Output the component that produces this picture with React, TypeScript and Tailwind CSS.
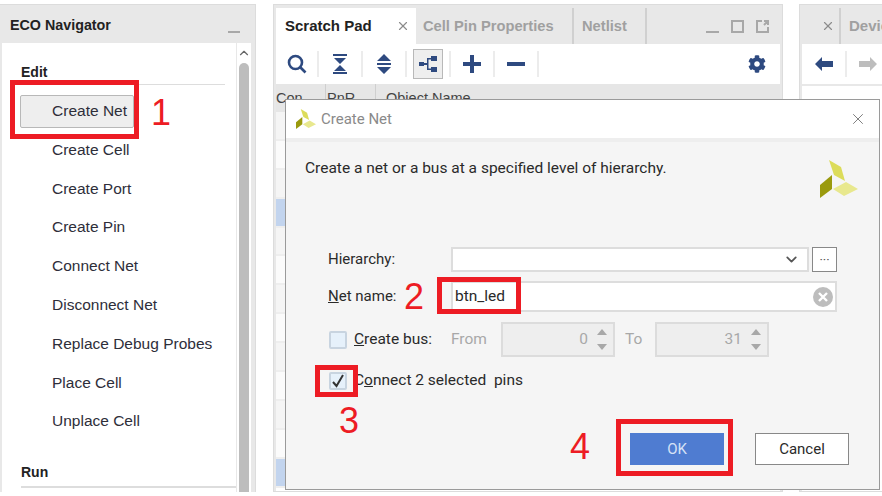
import type { ReactNode } from 'react';
import { ChevronDown, ChevronUp, X } from 'lucide-react';
import { FaCog } from 'react-icons/fa';

const edits = ['Create Cell', 'Create Port', 'Create Pin', 'Connect Net', 'Disconnect Net', 'Replace Debug Probes', 'Place Cell', 'Unplace Cell'];

// Selected rows of the object table
const selectedRows = [3, 12];
const rows = Array.from({ length: 13 }, (_, i) => i);

function ToolCell({ width = 44, children }: { width?: number; children: ReactNode }) {
  return (
    <div className="flex items-center" style={{ width }}>
      <span className="flex flex-1 items-center justify-center">{children}</span>
      <span className="h-[26px] w-[2px] bg-[#ececec]" />
    </div>
  );
}

function XilinxMark({ size }: { size: number }) {
  return (
    <svg width={size} height={size} viewBox="0 0 38 38">
      <path d="M9 0 L21 7 L25 21 L14 15 Z" fill="#dcdc5a" />
      <path d="M0 25 L12 15 L12 29 L0 38 Z" fill="#9a9a0e" />
      <path d="M13 29 L26 22 L38 29 L24 36 Z" fill="#e8e88e" />
    </svg>
  );
}

function Spinner({ value }: { value: string }) {
  return (
    <div className="flex h-[35px] w-[114px] items-center justify-end border-2 border-[#dcdcdc] bg-[#eeeeee] pr-[6px] text-[#a8a8a8]">
      <span className="mr-[9px]">{value}</span>
      <span className="flex flex-col gap-[9px]">
        <svg width="10" height="6" viewBox="0 0 10 6"><path d="M5 0 L10 6 H0 Z" fill="#a8a8a8" /></svg>
        <svg width="10" height="6" viewBox="0 0 10 6"><path d="M0 0 H10 L5 6 Z" fill="#a8a8a8" /></svg>
      </span>
    </div>
  );
}

function Callout({ className }: { className: string }) {
  return <div className={`absolute border-[5px] border-[#ed1c24] ${className}`} />;
}

function Marker({ className, children }: { className: string; children: ReactNode }) {
  return <span className={`absolute text-[36px] leading-none text-[#ed1c24] ${className}`}>{children}</span>;
}

export default function App() {
  return (
    <div className="relative h-[496px] w-[882px] overflow-hidden bg-white font-['Liberation_Sans',sans-serif] text-[15.5px] text-[#2e2e3a]">
      <div className="flex h-full items-start pt-[4px]">
        {/* ECO navigator */}
        <section className="flex h-[488px] w-[256px] shrink-0 flex-col border-t border-r border-[#dcdcdc] bg-[#e8e8e8] pr-[4px] pl-[2px]">
          <header className="flex h-[38px] shrink-0 items-center justify-between pt-[3px] pr-[11px] pl-[8px]">
            <span className="text-[14.3px] font-bold text-[#222222]">ECO Navigator</span>
            <span className="mt-[12px] h-[2px] w-[12px] bg-[#a8a8a8]" />
          </header>
          <div className="flex min-h-0 flex-1 bg-white">
            <div className="min-w-0 flex-1 pt-[19px] pl-[19px]">
              <div className="mr-[11px] border-b border-[#dddddd] pb-[1px] text-[14px] font-bold text-[#222222]">Edit</div>
              <div className="mt-[10px] mr-[102px] -ml-px flex h-[33px] items-center justify-end rounded-[2px] border border-[#b8b8b8] bg-[#eeeeee] pr-[6px] pb-[1px]">Create Net</div>
              <ul className="mt-[2px] pl-[31px]">
                {edits.map((label) => (
                  <li key={label} className="flex h-[38.8px] items-center">{label}</li>
                ))}
              </ul>
              <div className="mt-[22px] border-b-2 border-[#dddddd] pb-[3px] text-[14px] font-bold text-[#222222]">Run</div>
            </div>
            <div className="flex w-[15px] flex-col items-center border-l border-[#e8e8e8] pt-[3px]">
              <ChevronUp size={14} strokeWidth={2} className="text-[#666666]" />
              <div className="mt-[3px] w-[10px] flex-1 rounded-t-[5px] bg-[#bdbdbd]" />
            </div>
          </div>
        </section>

        {/* Scratch pad */}
        <section className="ml-[17px] flex h-[488px] w-[510px] shrink-0 flex-col border border-[#dcdcdc] bg-[#e8e8e8] px-[2px] pt-[3px]">
          <div className="flex h-[36px] shrink-0 items-center">
            <div className="flex h-full w-[140px] items-center justify-between bg-white pr-[6px] pl-[9px] text-[15px] font-bold text-[#222222]">
              Scratch Pad <X size={14} strokeWidth={2} className="text-[#8c8c8c]" />
            </div>
            <span className="flex h-full w-[158px] items-center border-r-2 border-[#d0d0d0] pl-[7px] text-[14.7px] font-bold text-[#a0a0a0]">Cell Pin Properties</span>
            <span className="flex h-full w-[73px] items-center border-r-2 border-[#d0d0d0] pl-[8px] text-[14.7px] font-bold text-[#a0a0a0]">Netlist</span>
            <span className="ml-auto flex items-center gap-[12px] pr-[11px]">
              <span className="mt-[12px] h-[2px] w-[13px] bg-[#a8a8a8]" />
              <span className="h-[13px] w-[13px] border-2 border-[#a8a8a8]" />
              <svg width="13" height="13" viewBox="0 0 13 13" fill="none" stroke="#a8a8a8" strokeWidth="2"><path d="M6 1 H1 V12 H12 V7" /><path d="M8 1 H12 V5 M12 1 L8 5" /></svg>
            </span>
          </div>
          <div className="flex h-[40px] shrink-0 items-center bg-white pr-[14px]">
            <ToolCell width={43}>
              <svg width="20" height="20" viewBox="0 0 20 20" fill="none" stroke="#2e4a80" strokeWidth="2.6"><circle cx="8.5" cy="8.5" r="6.5" /><path d="M13 13 L18.5 18.5" /></svg>
            </ToolCell>
            <ToolCell>
              <svg width="16" height="20" viewBox="0 0 16 20" fill="#2e4a80"><path d="M1 0 H15 V2 H1 Z M2 4 H14 L8 10 Z M8 11 L14 17 H2 Z M1 18 H15 V20 H1 Z" /></svg>
            </ToolCell>
            <ToolCell>
              <svg width="16" height="20" viewBox="0 0 16 20" fill="#2e4a80"><path d="M8 0 L15 7 H1 Z M1 9 H15 V11 H1 Z M1 13 H15 L8 20 Z" /></svg>
            </ToolCell>
            <ToolCell>
              <span className="flex h-[30px] w-[30px] items-center justify-center border border-[#b8b8b8] bg-[#eeeeee]">
                <svg width="18" height="18" viewBox="0 0 18 18" fill="#2e4a80"><path d="M0 7 H5 V11 H0 Z M12 1 H18 V6 H12 Z M12 12 H18 V17 H12 Z" /><path d="M5 8 H8 V3 H12 V4.5 H9.5 V13.5 H12 V15 H8 V10 H5 Z" /></svg>
              </span>
            </ToolCell>
            <ToolCell>
              <svg width="18" height="18" viewBox="0 0 18 18" fill="#2e4a80"><path d="M7 0 H11 V7 H18 V11 H11 V18 H7 V11 H0 V7 H7 Z" /></svg>
            </ToolCell>
            <ToolCell>
              <svg width="18" height="18" viewBox="0 0 18 18" fill="#2e4a80"><path d="M0 7 H18 V11 H0 Z" /></svg>
            </ToolCell>
            <FaCog size={18} className="ml-auto text-[#2e4a80]" />
          </div>
          <div className="flex h-[28px] shrink-0 bg-[#e6e6e6] text-[14.5px] text-[#444444]">
            <span className="w-[50px] border-r border-[#cfcfcf] pt-[4px]">Con</span>
            <span className="w-[50px] border-r border-[#cfcfcf] pt-[4px] pl-[1px]">PnR</span>
            <span className="flex-1 pt-[4px] pl-[10px]">Object Name</span>
          </div>
          <div className="min-h-0 flex-1 overflow-hidden bg-white">
            {rows.map((i) => (
              <div
                key={i}
                className={`h-[28.9px] border-b-2 border-[#eeeeee] ${selectedRows.includes(i) ? 'bg-[#c2d4ee]' : i % 2 === 0 ? 'bg-[#f5f5f5]' : 'bg-[#fbfbfb]'}`}
              />
            ))}
          </div>
        </section>

        {/* Device panel, cut off by the window edge */}
        <section className="ml-[16px] flex h-[488px] w-[90px] shrink-0 flex-col border border-[#dcdcdc] bg-[#e8e8e8] pt-[3px] pl-[2px]">
          <div className="flex h-[36px] shrink-0 items-center">
            <X size={14} strokeWidth={2} className="ml-[19px] shrink-0 text-[#8c8c8c]" />
            <span className="ml-[4px] flex h-full items-center overflow-hidden border-l-2 border-[#d0d0d0] pl-[8px] text-[15px] font-bold text-[#a0a0a0]">Device</span>
          </div>
          <div className="flex h-[40px] shrink-0 items-center bg-white pl-[13px]">
            <svg width="18" height="14" viewBox="0 0 18 14" fill="#2e4a80"><path d="M0 7 L7 0 V4 H18 V10 H7 V14 Z" /></svg>
            <span className="mx-[12px] h-[26px] w-[2px] bg-[#ececec]" />
            <svg width="18" height="14" viewBox="0 0 18 14" fill="#bdbdbd"><path d="M18 7 L11 0 V4 H0 V10 H11 V14 Z" /></svg>
          </div>
          <div className="flex-1 border-t-2 border-[#e8e8e8] bg-white" />
        </section>
      </div>

      {/* Create Net dialog */}
      <div className="absolute top-[99px] left-[285px] flex h-[391px] w-[595px] flex-col border border-[#9a9a9a] bg-[#f5f5f5] font-['Roboto',sans-serif] text-[15.5px] text-[#2a2a2a]">
        <div className="box-content flex h-[38px] shrink-0 items-center border-b-[4px] border-[#eeeeee] bg-white pr-[12px] pl-[10px]">
          <XilinxMark size={20} />
          <span className="ml-[5px] text-[15px] text-[#8a8a8a]">Create Net</span>
          <X size={18} strokeWidth={1} className="ml-auto text-[#555555]" />
        </div>
        <div className="flex min-h-0 flex-1 flex-col pt-[15px] pl-[19px]">
          <div className="flex h-[38px] items-start justify-between pr-[21px]">
            <p>Create a net or a bus at a specified level of hierarchy.</p>
            <span className="mt-[3px]"><XilinxMark size={38} /></span>
          </div>
          <div className="mt-[52px] flex h-[25px] items-center pl-[23px]">
            <span className="w-[123px] text-[15px]">Hierarchy:</span>
            <div className="flex h-[25px] w-[358px] items-center justify-end border-2 border-[#dddddd] bg-white pr-[7px]">
              <ChevronDown size={17} strokeWidth={2.5} className="text-[#555555]" />
            </div>
            <span className="ml-[3px] flex h-[25px] w-[25px] items-center justify-center border border-[#888888] bg-white pb-[1px] text-[13px] leading-none text-[#555555]">···</span>
          </div>
          <div className="mt-[9px] flex h-[31px] items-center pl-[23px]">
            <span className="w-[123px] text-[15px]"><u>N</u>et name:</span>
            <div className="flex h-[31px] w-[386px] items-center justify-between border-2 border-[#dddddd] bg-white pr-[2px] pl-[2px]">
              <span>btn_led</span>
              <svg width="20" height="20" viewBox="0 0 20 20"><circle cx="10" cy="10" r="10" fill="#bdbdbd" /><path d="M6 6 L14 14 M14 6 L6 14" stroke="#ffffff" strokeWidth="2.4" /></svg>
            </div>
          </div>
          <div className="mt-[10px] flex h-[35px] items-center pl-[24px]">
            <span className="h-[18px] w-[18px] rounded-[2px] border-2 border-[#c8d4e0] bg-[#e6f1fb]" />
            <span className="ml-[7px] w-[97px]"><u>C</u>reate bus:</span>
            <span className="w-[50px] text-[#a8a8a8]">From</span>
            <Spinner value="0" />
            <span className="mr-[14px] ml-[10px] w-[16px] text-[#a8a8a8]">To</span>
            <Spinner value="31" />
          </div>
          <div className="mt-[12px] flex h-[24px] items-center pl-[24px]">
            <span className="flex h-[18px] w-[18px] items-center justify-center rounded-[2px] border-2 border-[#c8d4e0] bg-[#e6f1fb]">
              <svg width="14" height="14" viewBox="0 0 14 14" fill="none" stroke="#333333" strokeWidth="2"><path d="M2 8 L5.5 12 L12 1" /></svg>
            </span>
            <span className="ml-[7px] whitespace-pre">C<u>o</u>nnect 2 selected  pins</span>
          </div>
          <div className="mt-auto mb-[24px] flex justify-end gap-[31px] pr-[30px] text-[15px]">
            <button className="h-[32px] w-[94px] bg-[#4f7cd1] text-[#d6e2f6]">OK</button>
            <button className="h-[32px] w-[94px] border border-[#888888] bg-white">Cancel</button>
          </div>
        </div>
      </div>

      {/* Numbered annotations */}
      <Callout className="top-[80px] left-[10px] h-[59px] w-[129px]" />
      <Callout className="top-[277px] left-[437px] h-[37px] w-[84px]" />
      <Callout className="top-[365px] left-[315px] h-[32px] w-[43px]" />
      <Callout className="top-[419px] left-[616px] h-[57px] w-[117px]" />
      <Marker className="top-[95px] left-[151px]">1</Marker>
      <Marker className="top-[279px] left-[404px]">2</Marker>
      <Marker className="top-[403px] left-[339px]">3</Marker>
      <Marker className="top-[429px] left-[570px]">4</Marker>
    </div>
  );
}
